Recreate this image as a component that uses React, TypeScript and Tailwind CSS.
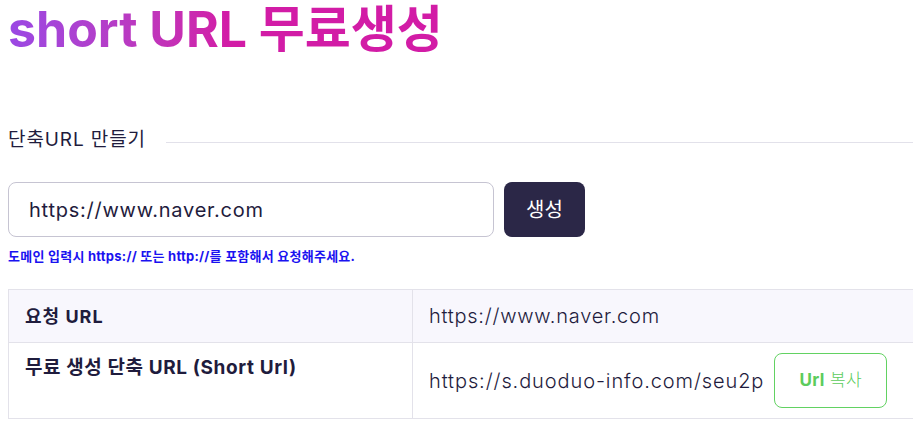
import React from 'react';

const fontStack = { fontFamily: '"Inter", "Noto Sans CJK KR", sans-serif' };

const App: React.FC = () => {
  return (
    <div className="w-[913px] h-[431px] overflow-hidden bg-white text-[#1f1c3d]" style={fontStack}>
      <div className="w-[940px] pl-2">
        {/* Title */}
        <h1 className="text-[50px] leading-[58px] font-bold bg-gradient-to-r from-[#9a48e4] via-[#d21ca6] to-[#d21ca6] bg-clip-text text-transparent w-fit pr-1">
          short URL 무료생성
        </h1>

        {/* Section label */}
        <div className="mt-[70px] flex items-center gap-5">
          <span className="text-[19px] leading-6 tracking-[0.9px] whitespace-nowrap">단축URL 만들기</span>
          <div className="flex-1 h-px bg-[#e2e1ea] mt-1" />
        </div>

        {/* Input row */}
        <div className="mt-[30px] flex items-center gap-[10px]">
          <div className="w-[486px] h-[55px] rounded-lg border border-[#c6c4d2] flex items-center px-5 text-[20px] tracking-[0.75px]">
            https://www.naver.com
          </div>
          <button className="w-[81px] h-[55px] rounded-lg bg-[#2b2747] text-white text-[20px]">생성</button>
        </div>
        <p className="mt-[11px] text-[13px] font-bold tracking-[0.25px] text-[#1a12f0] leading-4">
          도메인 입력시 https:// 또는 http://를 포함해서 요청해주세요.
        </p>

        {/* Result table */}
        <div className="mt-[25px] border-t border-b border-l border-[#e3e2ea] text-[#1f1c3d]">
          <div className="grid grid-cols-[404px_1fr] bg-[#f8f7fd] border-b border-[#e3e2ea]">
            <div className="h-[52px] px-4 flex items-center text-[18px] tracking-[1px] font-bold border-r border-[#e3e2ea]">요청 URL</div>
            <div className="h-[52px] px-4 flex items-center text-[20px] tracking-[0.75px] font-light">https://www.naver.com</div>
          </div>
          <div className="grid grid-cols-[404px_1fr] bg-white">
            <div className="h-[75px] px-4 pt-[11px] text-[19px] tracking-[0.6px] font-bold border-r border-[#e3e2ea]">무료 생성 단축 URL (Short Url)</div>
            <div className="h-[75px] px-4 flex items-center gap-[10px] text-[20px] tracking-[0.9px] font-light">
              <span>https://s.duoduo-info.com/seu2p</span>
              <button className="w-[113px] h-[55px] rounded-lg border border-[#62d262] text-[#5ccc5c] text-[17px] tracking-[0.4px]">
                <span className="font-bold">Url</span> 복사
              </button>
            </div>
          </div>
        </div>
      </div>
    </div>
  );
};

export default App;
